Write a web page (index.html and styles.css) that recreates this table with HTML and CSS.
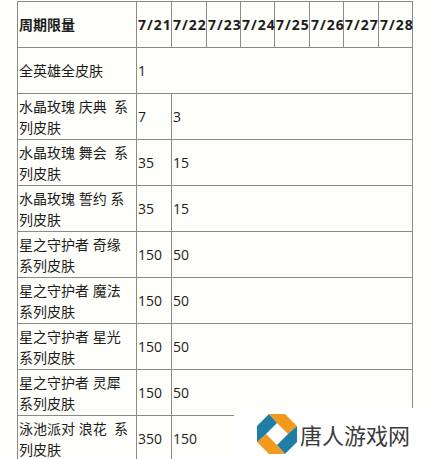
FILE: index.html
```html
<!DOCTYPE html>
<html lang="zh">
<head>
<meta charset="utf-8">
<link rel="stylesheet" href="styles.css">
</head>
<body>
<table class="limits">
  <colgroup>
    <col class="c-name">
    <col class="c-d35"><col class="c-d35"><col class="c-d34"><col class="c-d34">
    <col class="c-d35"><col class="c-d34"><col class="c-d35"><col class="c-d34">
  </colgroup>
  <tr class="head">
    <th>周期限量</th>
    <th class="date">7/21</th><th class="date">7/22</th><th class="date">7/23</th><th class="date">7/24</th><th class="date">7/25</th><th class="date">7/26</th><th class="date">7/27</th><th class="date">7/28</th>
  </tr>
  <tr><td>全英雄全皮肤</td><td colspan="8">1</td></tr>
  <tr><td>水晶玫瑰 庆典&nbsp; 系列皮肤</td><td>7</td><td colspan="7">3</td></tr>
  <tr><td>水晶玫瑰 舞会&nbsp; 系列皮肤</td><td>35</td><td colspan="7">15</td></tr>
  <tr><td>水晶玫瑰 誓约 系列皮肤</td><td>35</td><td colspan="7">15</td></tr>
  <tr><td>星之守护者 奇缘 系列皮肤</td><td>150</td><td colspan="7">50</td></tr>
  <tr><td>星之守护者 魔法 系列皮肤</td><td>150</td><td colspan="7">50</td></tr>
  <tr><td>星之守护者 星光 系列皮肤</td><td>150</td><td colspan="7">50</td></tr>
  <tr><td>星之守护者 灵犀 系列皮肤</td><td>150</td><td colspan="7">50</td></tr>
  <tr><td>泳池派对 浪花&nbsp; 系列皮肤</td><td>350</td><td colspan="7">150</td></tr>
</table>
<div class="watermark">
  <svg class="logo-icon" width="40" height="40" viewBox="0 0 40 40">
    <polygon fill="#f39a1e" points="12,0 28,0 40,12 31,20 20,9"/>
    <polygon fill="#1f7ea6" points="40,12 40,28 28,40 20,31 31,20"/>
    <polygon fill="#f39a1e" points="28,40 12,40 0,28 9,20 20,31"/>
    <polygon fill="#1f7ea6" points="0,28 0,12 12,0 20,9 9,20"/>
  </svg>
  <span class="logo-text">唐人游戏网</span>
</div>
</body>
</html>
```
FILE: styles.css
```css
html, body {
  margin: 0;
  padding: 0;
  background: #fefefa;
  overflow: hidden;
}
body {
  font-family: "Open Sans", "Noto Sans CJK SC", sans-serif;
  font-size: 14px;
  color: #1c1c1c;
}
.limits {
  border-collapse: collapse;
  table-layout: fixed;
  width: 395px;
  margin: 1px 0 0 17px;
}
.c-name { width: 119px; }
.c-d35 { width: 35px; }
.c-d34 { width: 34px; }
.limits th, .limits td {
  border: 1px solid #8a8a8a;
  padding: 0 0 0 1px;
  height: 45px;
  line-height: 21px;
  vertical-align: middle;
  text-align: left;
  white-space: normal;
  overflow: visible;
}
.limits th {
  font-weight: bold;
  white-space: nowrap;
}
.limits th.date {
  letter-spacing: 1px;
}
.watermark {
  position: absolute;
  left: 234px;
  top: 408px;
  width: 200px;
  height: 51px;
  background: #ffffff;
  display: flex;
  align-items: center;
  padding-left: 23px;
  box-sizing: border-box;
  gap: 3px;
}
.logo-icon {
  display: block;
  flex: none;
}
.logo-text {
  font-family: "Noto Sans CJK SC", sans-serif;
  font-size: 22px;
  line-height: 1;
  color: #3a3a3a;
  letter-spacing: 0;
}
```
